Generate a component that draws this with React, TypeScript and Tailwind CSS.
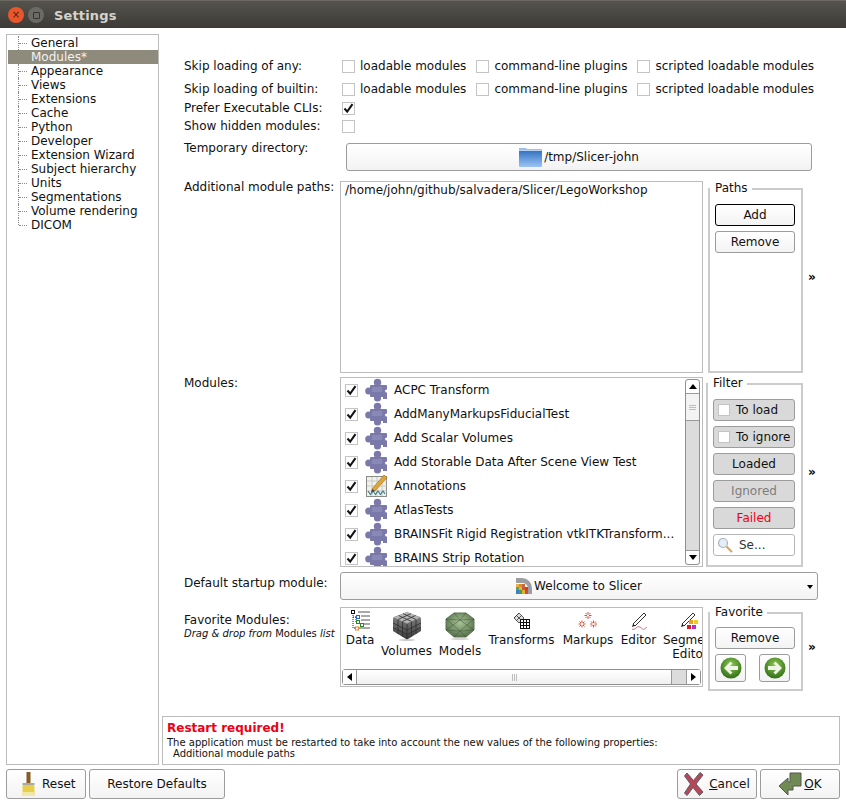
import type { ReactNode } from "react";

const treeItems = [
  "General",
  "Modules*",
  "Appearance",
  "Views",
  "Extensions",
  "Cache",
  "Python",
  "Developer",
  "Extension Wizard",
  "Subject hierarchy",
  "Units",
  "Segmentations",
  "Volume rendering",
  "DICOM",
];

const modules = [
  { name: "ACPC Transform" },
  { name: "AddManyMarkupsFiducialTest" },
  { name: "Add Scalar Volumes" },
  { name: "Add Storable Data After Scene View Test" },
  { name: "Annotations", annotation: true },
  { name: "AtlasTests" },
  { name: "BRAINSFit Rigid Registration vtkITKTransform..." },
  { name: "BRAINS Strip Rotation" },
];

const Check = ({ checked = false, className = "" }: { checked?: boolean; className?: string }) => (
  <span
    className={`flex h-[13px] w-[13px] shrink-0 items-center justify-center border border-[#c4c4c4] bg-white ${className}`}
  >
    {checked && (
      <svg width="11" height="11" viewBox="0 0 11 11">
        <path d="M1.5 5.5 L4.2 8.6 L9.5 1.2" fill="none" stroke="#111" strokeWidth="2" />
      </svg>
    )}
  </span>
);

const CheckLabel = ({ label }: { label: string }) => (
  <span className="flex items-center gap-[5px]">
    <Check />
    <span>{label}</span>
  </span>
);

const Btn = ({ children, className = "" }: { children: ReactNode; className?: string }) => (
  <div
    className={`flex items-center justify-center rounded-[3px] border border-[#9c9c9c] bg-gradient-to-b from-white to-[#f3f3f3] ${className}`}
  >
    {children}
  </div>
);

const FilterBtn = ({ children, className = "" }: { children: ReactNode; className?: string }) => (
  <div
    className={`flex h-[22px] items-center justify-center rounded-[3px] border border-[#9c9c9c] bg-[#d9d9d9] ${className}`}
  >
    {children}
  </div>
);

const Group = ({ title, children, className = "" }: { title: string; children: ReactNode; className?: string }) => (
  <div className={`relative border-2 border-[#cbcbcb] pl-[5px] pr-[6px] ${className}`}>
    <span className="absolute left-0 top-[-9px] bg-white pl-[5px] pr-[4px] leading-[14px]">{title}</span>
    {children}
  </div>
);

const More = ({ className = "" }: { className?: string }) => (
  <span className={`ml-[5px] w-[10px] text-[12px] font-bold leading-none text-black ${className}`}>»</span>
);

const Puzzle = () => (
  <svg width="24" height="24" viewBox="0 0 24 24" className="shrink-0">
    <g fill="#7a79a9">
      <rect x="5" y="7" width="17" height="12" rx="1" />
      <circle cx="12.5" cy="4.5" r="3.7" />
      <circle cx="3.8" cy="13" r="3.6" />
      <circle cx="12.5" cy="20" r="3.6" />
      <rect x="18" y="18" width="4" height="3" />
    </g>
    <circle cx="21.5" cy="13" r="1.5" fill="#fff" />
    <rect x="7" y="9" width="10" height="5" fill="#8988b6" />
  </svg>
);

const AnnotationIcon = () => (
  <svg width="24" height="24" viewBox="0 0 24 24" className="shrink-0">
    <rect x="1.5" y="2.5" width="20" height="20" fill="#f1f1ec" stroke="#8a8a86" />
    <path
      d="M2 7h20M2 12h20M2 17h20M7 3v19M12 3v19M17 3v19"
      stroke="#c3c3bd"
      strokeWidth="0.8"
      fill="none"
    />
    <path d="M3 17 L5.5 20.5 L8 17 L10.5 20.5 L13 17 L15.5 20.5 L18 17 L20 20" fill="none" stroke="#3f7f8f" strokeWidth="1.2" />
    <path d="M7 15 L19 1 L22 3.5 L10 17 Z" fill="#e0a63a" stroke="#9a6a1c" strokeWidth="0.6" />
    <path d="M7 15 L10 17 L6 18.5 Z" fill="#444" />
  </svg>
);

const FolderIcon = () => (
  <svg width="23" height="20" viewBox="0 0 23 20" className="shrink-0">
    <defs>
      <linearGradient id="folderTop" x1="0" y1="0" x2="0" y2="1">
        <stop offset="0" stopColor="#2f6fc0" />
        <stop offset="1" stopColor="#9cc4f4" />
      </linearGradient>
    </defs>
    <path d="M0 1h7l1 1h15v3H0z" fill="#9dbfe8" />
    <rect x="0" y="3" width="23" height="17" rx="1" fill="url(#folderTop)" />
    <rect x="0" y="3" width="23" height="1" fill="#bcd5f2" />
  </svg>
);

const WelcomeIcon = () => (
  <svg width="16" height="16" viewBox="0 0 16 16" className="shrink-0">
    <path d="M0 0 H6 A10 10 0 0 1 16 10 V16 H12 V10 A6 6 0 0 0 6 5 H0 Z" fill="#9b9ea3" />
    <rect x="0" y="6" width="3" height="3" fill="#e9b14a" />
    <rect x="3" y="6" width="3" height="3" fill="#d88d3c" />
    <rect x="6" y="6" width="3" height="3" fill="#c86a3a" />
    <rect x="0" y="9" width="3" height="3" fill="#63a14c" />
    <rect x="3" y="9" width="3" height="3" fill="#d9b63c" />
    <rect x="6" y="9" width="3" height="3" fill="#d7553c" />
    <rect x="9" y="9" width="3" height="3" fill="#c83f3a" />
    <rect x="0" y="12" width="3" height="4" fill="#3f7fc0" />
    <rect x="3" y="12" width="3" height="4" fill="#43a050" />
    <rect x="6" y="12" width="3" height="4" fill="#e0b030" />
    <rect x="9" y="12" width="3" height="4" fill="#d84a30" />
  </svg>
);

const SearchIcon = () => (
  <svg width="16" height="16" viewBox="0 0 16 16" className="shrink-0">
    <circle cx="6" cy="6" r="4.5" fill="#e3eef8" stroke="#a9b5c2" strokeWidth="1.2" />
    <path d="M9.5 9.5 L15 15" stroke="#d8a860" strokeWidth="2.2" />
  </svg>
);

const DataIcon = () => (
  <svg width="21" height="21" viewBox="0 0 21 21">
    <path d="M3 3v15h3M3 7h6M6 7v5h3" fill="none" stroke="#222" strokeWidth="1" strokeDasharray="1 1" />
    <path d="M8 2h12M11 6h9M11 10h9M11 14h9M8 18h12" stroke="#555" strokeWidth="1" />
    <rect x="1.5" y="0.5" width="3" height="3" fill="#fff" stroke="#111" />
    <rect x="6.5" y="5.5" width="3" height="3" fill="#fff" stroke="#2a62c9" />
    <rect x="6.5" y="10.5" width="3" height="3" fill="#fff" stroke="#2b8a2b" />
    <rect x="10.5" y="13.5" width="3" height="3" fill="#fff" stroke="#2b8a2b" />
    <rect x="5.5" y="17" width="3" height="3" fill="#fff" stroke="#e08a1e" />
  </svg>
);

const CubeIcon = () => (
  <svg width="28" height="30" viewBox="0 0 28 30">
    <defs>
      <linearGradient id="cubeSide" x1="0" y1="0" x2="0" y2="1">
        <stop offset="0" stopColor="#8d8d8d" />
        <stop offset="1" stopColor="#3a3a3a" />
      </linearGradient>
    </defs>
    <path d="M14 1 L27 6 Q28 6.5 28 8 V20 L15 28 Q14 28.5 13 28 L0 20 V8 Q0 6.5 1 6 Z" fill="url(#cubeSide)" />
    <path d="M14 1 L27 6.5 L14 12.5 L1 6.5 Z" fill="#b5b5b5" />
    <path
      d="M5.5 4.5 L18.5 10.5 M10 2.6 L23 8.5 M22.5 4.5 L9.5 10.5 M18 2.6 L5 8.5 M5 9 V23 M9.5 11 V25.5 M18.5 11 V25.5 M23 9 V23 M14 13 V28 M0 12 L14 19 L28 12 M0 16.5 L14 23.5 L28 16.5"
      fill="none"
      stroke="#2f2f2f"
      strokeWidth="0.8"
    />
    <ellipse cx="14" cy="29" rx="8" ry="1" fill="#999" opacity="0.5" />
  </svg>
);

const GemIcon = () => (
  <svg width="30" height="28" viewBox="0 0 30 28">
    <defs>
      <radialGradient id="gem" cx="0.5" cy="0.4" r="0.7">
        <stop offset="0" stopColor="#a9c397" />
        <stop offset="1" stopColor="#4a6440" />
      </radialGradient>
    </defs>
    <path d="M9 1 H21 L29 7 V18 L21 25 H9 L1 18 V7 Z" fill="url(#gem)" stroke="#5d7350" />
    <path
      d="M9 1 L15 8 L21 1 M1 7 L15 8 L29 7 M1 18 L8 13 L1 7 M29 18 L22 13 L29 7 M8 13 L15 8 L22 13 L15 19 Z M9 25 L15 19 L21 25 M1 18 L15 19 L29 18"
      fill="none"
      stroke="#3f5636"
      strokeWidth="0.5"
    />
    <ellipse cx="15" cy="27" rx="9" ry="1" fill="#aaa" opacity="0.5" />
  </svg>
);

const TransformIcon = () => (
  <svg width="18" height="18" viewBox="0 0 18 18">
    <path
      d="M6 1 L11 6 L6 11 L1 6 Z M3.5 3.5 L8.5 8.5 M6 1 L1 6 M8.5 3.5 L3.5 8.5"
      fill="#ddd"
      stroke="#333"
      strokeWidth="0.8"
    />
    <rect x="7.5" y="7.5" width="9" height="9" fill="#fff" stroke="#111" />
    <path d="M10.5 7.5v9M13.5 7.5v9M7.5 10.5h9M7.5 13.5h9" stroke="#111" strokeWidth="1" />
  </svg>
);

const Star = ({ x, y }: { x: number; y: number }) => (
  <path
    d={`M${x} ${y - 3.5}V${y - 1}M${x} ${y + 1}V${y + 3.5}M${x - 3.5} ${y}H${x - 1}M${x + 1} ${y}H${x + 3.5}M${x - 2.5} ${y - 2.5}L${x - 1} ${y - 1}M${x + 1} ${y + 1}L${x + 2.5} ${y + 2.5}M${x + 2.5} ${y - 2.5}L${x + 1} ${y - 1}M${x - 1} ${y + 1}L${x - 2.5} ${y + 2.5}`}
    stroke="#d8381e"
    strokeWidth="0.9"
    fill="none"
  />
);

const MarkupsIcon = () => (
  <svg width="20" height="20" viewBox="0 0 20 20">
    <Star x={10} y={4.5} />
    <Star x={4} y={13} />
    <Star x={15.5} y={13} />
  </svg>
);

const EditorIcon = () => (
  <svg width="20" height="20" viewBox="0 0 20 20">
    <path d="M4 13 L15 2 L17 4 L6 15 Z" fill="#fff" stroke="#333" strokeWidth="1" />
    <path d="M4 13 L6 15 L3 16 Z" fill="#222" />
    <path d="M3 18 C6 20 8 14 11 16 S14 20 18 16" fill="none" stroke="#d0497a" strokeWidth="0.8" />
  </svg>
);

const SegmentIcon = () => (
  <svg width="20" height="20" viewBox="0 0 20 20">
    <path d="M2 13 L13 2 L15 4 L4 15 Z" fill="#fff" stroke="#333" strokeWidth="1" />
    <path d="M2 13 L4 15 L1 16 Z" fill="#222" />
    <rect x="9" y="9" width="4" height="4" fill="#f0a020" />
    <rect x="14" y="9" width="4" height="4" fill="#e8d020" />
    <rect x="7" y="14" width="4" height="4" fill="#d82020" />
    <rect x="12" y="14" width="4" height="4" fill="#b030d0" />
  </svg>
);

const ArrowCircle = ({ flip = false, id }: { flip?: boolean; id: string }) => (
  <svg width="22" height="22" viewBox="0 0 22 22" style={flip ? { transform: "scaleX(-1)" } : undefined}>
    <defs>
      <radialGradient id={id} cx="0.5" cy="0.35" r="0.7">
        <stop offset="0" stopColor="#8cc653" />
        <stop offset="1" stopColor="#2a6a12" />
      </radialGradient>
    </defs>
    <circle cx="11" cy="11" r="10.5" fill={`url(#${id})`} />
    <path d="M4 11 L10.5 4.5 L12.5 6.5 L10 9 H18 V13 H10 L12.5 15.5 L10.5 17.5 Z" fill="#eef4e6" />
  </svg>
);

const BrushIcon = () => (
  <svg width="13" height="24" viewBox="0 0 13 24" className="shrink-0">
    <rect x="4.5" y="0" width="4" height="11" fill="#8a5a26" />
    <rect x="0.5" y="11" width="12" height="2" fill="#a9a9a0" />
    <rect x="0.5" y="13" width="12" height="11" rx="1" fill="#e6cf4a" />
    <rect x="0.5" y="20" width="12" height="4" fill="#f0e8a8" />
  </svg>
);

const CancelIcon = () => (
  <svg width="20" height="24" viewBox="0 0 20 24" className="shrink-0">
    <path
      d="M3 1 L9.5 8.5 L16 0.5 L19 3 L12 12 L19 20 L15.5 23.5 L9 15.5 L3 23.5 L0.5 21 L6.5 12 L0.5 4 Z"
      fill="#b5475a"
      stroke="#5d5d5d"
      strokeWidth="1"
    />
  </svg>
);

const OkIcon = () => (
  <svg width="24" height="24" viewBox="0 0 24 24" className="shrink-0">
    <path
      d="M12 1 H23 V14 L15 14 V18 L10 18 V23 L1 14 L10 6 V10 H12 Z"
      fill="#6f8a52"
      stroke="#55564f"
      strokeWidth="1"
    />
  </svg>
);

const Favorite = ({
  label,
  second,
  icon,
  iconHeight,
  width,
}: {
  label: string;
  second?: string;
  icon: ReactNode;
  iconHeight: string;
  width: string;
}) => (
  <div className={`flex shrink-0 flex-col items-center text-center leading-[14px] ${width}`}>
    <div className={`flex items-center justify-center ${iconHeight}`}>{icon}</div>
    <span className="whitespace-nowrap">{label}</span>
    {second && <span className="whitespace-nowrap">{second}</span>}
  </div>
);

export default function App() {
  return (
    <div
      className="flex h-[806px] w-[846px] flex-col overflow-hidden bg-white text-[12px] leading-[14px] text-[#111]"
      style={{ fontFamily: '"DejaVu Sans", sans-serif' }}
    >
      <div className="flex h-[28px] shrink-0 items-center border-t border-[#6b6962] bg-gradient-to-b from-[#55534c] to-[#3c3b37] pl-[8px] pt-[1px]">
        <span className="flex h-[16px] w-[16px] items-center justify-center rounded-full bg-[#e9562b] text-[10px] leading-none text-[#5a1a08]">
          ×
        </span>
        <span className="ml-[4px] flex h-[16px] w-[16px] items-center justify-center rounded-full bg-[#6b6a64]">
          <span className="h-[7px] w-[7px] rounded-[1px] border border-[#35342f]" />
        </span>
        <span className="ml-[10px] pt-[1px] text-[13px] font-bold tracking-[0.15px] text-[#d6d3ca]">Settings</span>
      </div>

      <div className="flex min-h-0 flex-1 gap-[3px] pl-[6px] pr-[6px] pt-[6px]">
        <div className="h-[731px] w-[153px] shrink-0 border border-[#bcbcbc] pl-[1px] pt-[1px]">
          {treeItems.map((item, i) => (
            <div
              key={item}
              className={`flex h-[14px] items-center ${item === "Modules*" ? "bg-[#8f8b7c] text-[#f4f2ec]" : ""}`}
            >
              <span
                className={`ml-[10px] flex h-[14px] w-[1px] border-l border-dotted border-[#8a8a8a] ${
                  i === treeItems.length - 1 ? "self-start !h-[7px]" : ""
                }`}
              />
              <span className="w-[8px] border-t border-dotted border-[#8a8a8a]" />
              <span className="ml-[4px]">{item}</span>
            </div>
          ))}
        </div>

        <div className="flex min-w-0 flex-1 flex-col">
          <div className="flex-1 pl-[22px]">
            <div className="mt-[22px] flex h-[20px] items-center">
              <span className="w-[158px]">Skip loading of any:</span>
              <div className="flex gap-[10px]">
                <CheckLabel label="loadable modules" />
                <CheckLabel label="command-line plugins" />
                <CheckLabel label="scripted loadable modules" />
              </div>
            </div>
            <div className="mt-[3px] flex h-[20px] items-center">
              <span className="w-[158px]">Skip loading of builtin:</span>
              <div className="flex gap-[10px]">
                <CheckLabel label="loadable modules" />
                <CheckLabel label="command-line plugins" />
                <CheckLabel label="scripted loadable modules" />
              </div>
            </div>
            <div className="flex h-[18px] items-center">
              <span className="w-[158px]">Prefer Executable CLIs:</span>
              <Check checked />
            </div>
            <div className="flex h-[18px] items-center">
              <span className="w-[158px]">Show hidden modules:</span>
              <Check />
            </div>
            <div className="mt-[8px] flex h-[28px]">
              <span className="w-[162px] leading-[10px]">Temporary directory:</span>
              <Btn className="h-[28px] w-[466px] gap-[2px]">
                <FolderIcon />
                <span>/tmp/Slicer-john</span>
              </Btn>
            </div>

            <div className="mt-[10px] flex h-[192px] items-center">
              <span className="w-[156px] self-start leading-[13px]">Additional module paths:</span>
              <div className="h-[192px] w-[363px] border border-[#bcbcbc] pl-[4px] pt-[1px]">
                /home/john/github/salvadera/Slicer/LegoWorkshop
              </div>
              <Group title="Paths" className="ml-[5px] mt-[7px] h-[185px] w-[95px] pt-[14px]">
                <Btn className="h-[22px] !border-black">Add</Btn>
                <Btn className="mt-[5px] h-[22px]">Remove</Btn>
              </Group>
              <More />
            </div>

            <div className="mt-[4px] flex h-[190px] items-center">
              <span className="w-[156px] self-start leading-[12px]">Modules:</span>
              <div className="flex h-[190px] w-[363px] overflow-hidden border border-[#bcbcbc]">
                <div className="min-w-0 flex-1 overflow-hidden pl-[4px]">
                  {modules.map((m) => (
                    <div key={m.name} className="flex h-[24px] shrink-0 items-center">
                      <Check checked />
                      <span className="ml-[7px] mr-[5px] flex">{m.annotation ? <AnnotationIcon /> : <Puzzle />}</span>
                      <span className="whitespace-nowrap">{m.name}</span>
                    </div>
                  ))}
                </div>
                <div className="my-[1px] mr-[2px] flex w-[15px] shrink-0 flex-col rounded-[3px] border border-[#8f8f8f] bg-[#dcdcdc]">
                  <div className="flex h-[14px] items-center justify-center rounded-t-[3px] border-b border-[#9a9a9a] bg-white">
                    <span className="h-0 w-0 border-x-[4px] border-b-[5px] border-x-transparent border-b-black" />
                  </div>
                  <div className="flex h-[27px] flex-col items-center justify-center gap-[1px] border-b border-[#9a9a9a] bg-[#f3f3f3]">
                    <span className="h-[1px] w-[7px] bg-[#bdbdbd]" />
                    <span className="h-[1px] w-[7px] bg-[#bdbdbd]" />
                    <span className="h-[1px] w-[7px] bg-[#bdbdbd]" />
                  </div>
                  <div className="flex-1" />
                  <div className="flex h-[14px] items-center justify-center rounded-b-[3px] border-t border-[#9a9a9a] bg-white">
                    <span className="h-0 w-0 border-x-[4px] border-t-[5px] border-x-transparent border-t-black" />
                  </div>
                </div>
              </div>
              <Group title="Filter" className="ml-[3px] mt-[6px] h-[184px] w-[97px] pt-[14px]">
                <div className="flex flex-col gap-[5px]">
                  <FilterBtn className="!justify-start pl-[4px]">
                    <span className="h-[12px] w-[12px] border border-[#c4c4c4] bg-white" />
                    <span className="ml-[6px]">To load</span>
                  </FilterBtn>
                  <FilterBtn className="!justify-start pl-[4px]">
                    <span className="h-[12px] w-[12px] border border-[#c4c4c4] bg-white" />
                    <span className="ml-[6px]">To ignore</span>
                  </FilterBtn>
                  <FilterBtn>Loaded</FilterBtn>
                  <FilterBtn className="text-[#7d7d7d]">Ignored</FilterBtn>
                  <FilterBtn className="text-[#f00014]">Failed</FilterBtn>
                  <div className="flex h-[22px] items-center rounded-[3px] border border-[#b5b5b5] bg-white pl-[3px] text-[#333]">
                    <SearchIcon />
                    <span className="ml-[6px]">Se...</span>
                  </div>
                </div>
              </Group>
              <More />
            </div>

            <div className="mt-[5px] flex h-[28px]">
              <span className="w-[156px] pt-[4px]">Default startup module:</span>
              <Btn className="relative h-[28px] w-[478px] gap-[2px]">
                <WelcomeIcon />
                <span>Welcome to Slicer</span>
                <span className="absolute right-[4px] top-[12px] h-0 w-0 border-x-[3px] border-t-[4px] border-x-transparent border-t-black" />
              </Btn>
            </div>

            <div className="mt-[7px] flex h-[84px]">
              <div className="w-[156px] pt-[6px]">
                <div>Favorite Modules:</div>
                <div className="whitespace-nowrap text-[10px] italic leading-[13px]">
                  Drag &amp; drop from <span className="not-italic">Modules</span> list
                </div>
              </div>
              <div className="flex h-[80px] w-[363px] flex-col border border-[#bcbcbc]">
                <div className="flex min-h-0 flex-1 gap-[7px] overflow-hidden pl-[5px]">
                  <Favorite label="Data" width="w-[28px]" iconHeight="h-[25px]" icon={<DataIcon />} />
                  <Favorite label="Volumes" width="w-[51px]" iconHeight="h-[36px]" icon={<CubeIcon />} />
                  <Favorite label="Models" width="w-[42px]" iconHeight="h-[36px]" icon={<GemIcon />} />
                  <Favorite label="Transforms" width="w-[67px]" iconHeight="h-[25px]" icon={<TransformIcon />} />
                  <Favorite label="Markups" width="w-[52px]" iconHeight="h-[25px]" icon={<MarkupsIcon />} />
                  <Favorite label="Editor" width="w-[35px]" iconHeight="h-[25px]" icon={<EditorIcon />} />
                  <Favorite label="Segment" second="Editor" width="w-[54px]" iconHeight="h-[25px]" icon={<SegmentIcon />} />
                </div>
                <div className="mx-[1px] mb-[1px] flex h-[16px] shrink-0 rounded-[3px] border border-[#8f8f8f] bg-[#dcdcdc]">
                  <div className="flex w-[14px] items-center justify-center border-r border-[#9a9a9a] bg-white">
                    <span className="h-0 w-0 border-y-[4px] border-r-[5px] border-y-transparent border-r-black" />
                  </div>
                  <div className="flex w-[315px] items-center justify-center gap-[1px] border-r border-[#9a9a9a] bg-gradient-to-b from-white to-[#f0f0f0]">
                    <span className="h-[7px] w-[1px] bg-[#bdbdbd]" />
                    <span className="h-[7px] w-[1px] bg-[#bdbdbd]" />
                    <span className="h-[7px] w-[1px] bg-[#bdbdbd]" />
                  </div>
                  <div className="flex-1" />
                  <div className="flex w-[14px] items-center justify-center border-l border-[#9a9a9a] bg-white">
                    <span className="h-0 w-0 border-y-[4px] border-l-[5px] border-y-transparent border-l-black" />
                  </div>
                </div>
              </div>
              <Group title="Favorite" className="ml-[5px] mt-[5px] h-[79px] w-[95px] pt-[13px]">
                <Btn className="h-[22px]">Remove</Btn>
                <div className="mt-[5px] flex gap-[13px]">
                  <Btn className="h-[28px] w-[31px]">
                    <ArrowCircle id="arrowLeft" />
                  </Btn>
                  <Btn className="h-[28px] w-[31px]">
                    <ArrowCircle id="arrowRight" flip />
                  </Btn>
                </div>
              </Group>
              <span className="self-center pb-[4px]">
                <More />
              </span>
            </div>
          </div>

          <div className="h-[49px] w-[678px] shrink-0 border border-[#bcbcbc] px-[4px] text-[10px] leading-[11px]">
            <div className="mt-[4px] text-[12px] font-bold leading-[14px] text-[#f00014]">Restart required!</div>
            <div className="mt-[2px]">
              The application must be restarted to take into account the new values of the following properties:
            </div>
            <div className="pl-[6px]">Additional module paths</div>
          </div>
        </div>
      </div>

      <div className="flex h-[41px] shrink-0 gap-[3px] px-[6px] pt-[4px]">
        <Btn className="h-[30px] w-[80px] !justify-start gap-[7px] pl-[15px]">
          <BrushIcon />
          <span>Reset</span>
        </Btn>
        <Btn className="h-[30px] w-[136px]">Restore Defaults</Btn>
        <div className="flex-1" />
        <Btn className="h-[30px] w-[80px] gap-[5px]">
          <CancelIcon />
          <span>
            <span className="underline">C</span>ancel
          </span>
        </Btn>
        <Btn className="h-[30px] w-[80px] gap-[2px]">
          <OkIcon />
          <span>
            <span className="underline">O</span>K
          </span>
        </Btn>
      </div>
    </div>
  );
}
